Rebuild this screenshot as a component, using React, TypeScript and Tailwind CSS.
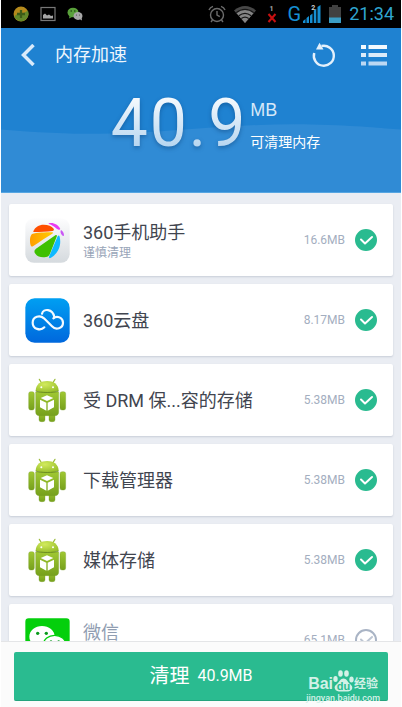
import { useState } from 'react'
import clsx from 'clsx'

type IconName = 'assistant' | 'cloud' | 'android' | 'wechat'

interface AppEntry {
  id: string
  name: string
  note?: string
  size: string
  icon: IconName
  checked: boolean
}

const apps: AppEntry[] = [
  { id: 'assistant', name: '360手机助手', note: '谨慎清理', size: '16.6MB', icon: 'assistant', checked: true },
  { id: 'cloud', name: '360云盘', size: '8.17MB', icon: 'cloud', checked: true },
  { id: 'drm', name: '受 DRM 保...容的存储', size: '5.38MB', icon: 'android', checked: true },
  { id: 'download', name: '下载管理器', size: '5.38MB', icon: 'android', checked: true },
  { id: 'media', name: '媒体存储', size: '5.38MB', icon: 'android', checked: true },
  { id: 'wechat', name: '微信', note: '\u00a0', size: '65.1MB', icon: 'wechat', checked: false },
]

function AssistantIcon() {
  return (
    <svg viewBox="0 0 135 135" className="size-full" aria-hidden="true">
      <defs>
        <linearGradient id="assistantBg" x1="0" y1="0" x2="0" y2="1">
          <stop offset="0" stopColor="#fdfdfe" />
          <stop offset="1" stopColor="#d5dade" />
        </linearGradient>
        <linearGradient id="assistantYellow" x1="0" y1="0" x2="1" y2="0">
          <stop offset="0" stopColor="#ff9d00" />
          <stop offset="1" stopColor="#ffcd00" />
        </linearGradient>
      </defs>
      <rect x="1" y="1" width="133" height="133" rx="26" fill="url(#assistantBg)" />
      <path d="M25 40C30 27 42 20 56 20c14 0 24 4 30 12 2 4 0 6-4 7-14 2-37 3-54 3-3 0-4 0-3-2Z" fill="#ff4f00" />
      <path d="M21 48c14-4 40-5 60-5 3 0 4 2 1 4-20 11-38 25-57 37-4 3-7 2-8-2-3-12-3-27 4-34Z" fill="url(#assistantYellow)" />
      <path d="M91 52c4-2 6 0 4 4L75 107c-2 6-6 9-12 10-13 3-27-1-33-11-3-5-2-10 3-14Z" fill="#3fc000" />
      <path d="M98 55c2-4 5-3 6 1 6 26-4 51-26 63-5 3-8 1-5-5Z" fill="#0fb9ff" />
      <path d="M72 16c12-4 27 4 33 15 2 4-1 5-4 4-9-2-11-11-29-17-2 0-2-1 0-2Z" fill="#e83af2" />
      <path d="M107 38c2-4 10 6 10 13 0 3-2 4-4 2-4-3-8-11-6-15Z" fill="#c956f5" />
    </svg>
  )
}

function CloudIcon() {
  return (
    <svg viewBox="0 0 135 135" className="size-full" aria-hidden="true">
      <defs>
        <linearGradient id="cloudBg" x1="0" y1="0" x2="0" y2="1">
          <stop offset="0" stopColor="#009ff2" />
          <stop offset="1" stopColor="#0068dd" />
        </linearGradient>
      </defs>
      <rect x="1" y="1" width="133" height="133" rx="28" fill="url(#cloudBg)" />
      <g fill="none" stroke="#f4faff" strokeWidth="6.5" strokeLinecap="round">
        <path d="M58 88C47 99 23 94 23 74c0-19 22-24 34-13l24 24c12 13 33 6 33-11 0-15-18-23-29-13" />
        <path d="M51 47c4-16 32-16 37 10" />
      </g>
    </svg>
  )
}

function AndroidIcon() {
  return (
    <svg viewBox="0 0 135 135" className="size-full" aria-hidden="true">
      <defs>
        <linearGradient id="droidBody" x1="0" y1="0" x2="0" y2="1">
          <stop offset="0" stopColor="#a0c832" />
          <stop offset="1" stopColor="#76a01c" />
        </linearGradient>
        <radialGradient id="droidHead" cx="0.4" cy="0.3" r="0.8">
          <stop offset="0" stopColor="#d2ea5d" />
          <stop offset="1" stopColor="#93bb27" />
        </radialGradient>
      </defs>
      <path d="m43 4 8 13M90 4l-8 13" stroke="#9cbc3c" strokeWidth="3.5" strokeLinecap="round" />
      <g fill="url(#droidBody)" stroke="#739a22" strokeWidth="1">
        <rect x="42" y="100" width="18" height="31" rx="6" />
        <rect x="72" y="100" width="18" height="31" rx="6" />
        <rect x="11" y="41" width="17" height="55" rx="6" />
        <rect x="105" y="41" width="17" height="55" rx="6" />
        <path d="M32 42h69v60c0 7-4 11-11 11H43c-7 0-11-4-11-11Z" />
      </g>
      <path d="M32 38C33 18 48 9 66.500 9S100 18 101 38c-15 6-54 6-69 0Z" fill="url(#droidHead)" />
      <path d="M32 39c15 6 54 6 69 0" fill="none" stroke="#64841f" strokeWidth="2.500" />
      <circle cx="49" cy="28" r="3" fill="#fff" />
      <circle cx="84" cy="28" r="3" fill="#fff" />
      <path d="m66 52 19 8-19 9-19-9ZM45 65l19 9v24L45 88ZM87 65l-19 9v24l19-10Z" fill="#fff" />
    </svg>
  )
}

function WechatIcon() {
  return (
    <svg viewBox="0 0 135 135" className="size-full" aria-hidden="true">
      <rect x="1" y="1" width="133" height="133" rx="10" fill="#04cf0c" />
      <ellipse cx="51" cy="56" rx="38" ry="32" fill="#fff" />
      <path d="m28 78-4 16 18-9Z" fill="#fff" />
      <circle cx="38" cy="46" r="5" fill="#0a9a1c" />
      <circle cx="64" cy="46" r="5" fill="#0a9a1c" />
      <ellipse cx="89" cy="80" rx="34" ry="28" fill="#fff" stroke="#04cf0c" strokeWidth="4" />
      <circle cx="78" cy="71" r="4" fill="#0a9a1c" />
      <circle cx="101" cy="71" r="4" fill="#0a9a1c" />
    </svg>
  )
}

const icons: Record<IconName, () => React.JSX.Element> = {
  assistant: AssistantIcon,
  cloud: CloudIcon,
  android: AndroidIcon,
  wechat: WechatIcon,
}

function StatusBar() {
  return (
    <div className="flex h-7 shrink-0 items-center justify-between bg-black pr-[7px] pl-3">
      <div className="flex items-center gap-[11px]">
        <svg viewBox="0 0 14 14" className="size-4" aria-hidden="true">
          <circle cx="7" cy="7" r="6.500" fill="#b58a1c" />
          <path d="M1 9.500C4 5 9 8 13 4a6.500 6.500 0 0 1-12 5.500Z" fill="#62892a" />
          <path d="M7 3.500v7M3.500 7h7" stroke="#3d5c18" strokeWidth="2" />
        </svg>
        <svg viewBox="0 0 16 16" className="size-4" aria-hidden="true">
          <rect x="1" y="1.500" width="14" height="13" fill="none" stroke="#777" strokeWidth="1.200" />
          <path d="M3 12.500V9l2-1.500 2 2 2-1 2 1.500 2-.5v3Z" fill="#a5a5a5" />
        </svg>
        <svg viewBox="0 0 16 14" className="h-3.5 w-4" aria-hidden="true">
          <ellipse cx="6" cy="5.500" rx="5.500" ry="4.800" fill="#59a03a" />
          <path d="m2.500 9-.5 2.500 3-1.500Z" fill="#59a03a" />
          <circle cx="4.200" cy="4" r="0.800" fill="#1c3a12" />
          <circle cx="7.800" cy="4" r="0.800" fill="#1c3a12" />
          <ellipse cx="11" cy="9" rx="4.500" ry="3.900" fill="#a8a8a8" />
          <path d="m12.500 12 2.500 1.500-.5-3Z" fill="#a8a8a8" />
          <circle cx="9.500" cy="8" r="0.600" fill="#444" />
          <circle cx="12.500" cy="8" r="0.600" fill="#444" />
        </svg>
      </div>
      <div className="flex items-center gap-2 font-[Roboto,sans-serif]">
        <svg viewBox="0 0 18 18" className="size-[18px]" fill="none" stroke="#6c6c6c" strokeWidth="1.400" aria-hidden="true">
          <circle cx="9" cy="10" r="6.500" />
          <path d="M9 6v4.200l2.800 1.500M1 5a6 6 0 0 1 4-3.700M17 5a6 6 0 0 0-4-3.700M4.500 15 3 17M13.500 15l1.500 2" />
        </svg>
        <svg viewBox="0 0 22 17" className="h-[17px] w-[22px]" aria-hidden="true">
          <path d="m11 17 11-12.500C15.500-1.500 6.500-1.500 0 4.500Z" fill="#484848" />
          <path d="m11 17 9-10.400c-5.500-4.600-12.500-4.600-18 0Z" fill="#858585" />
          <path d="M2.200 6.800c5.300-4.500 12.300-4.500 17.600 0M4.800 9.800c3.800-3 8.600-3 12.400 0M7.300 12.600c2.300-1.700 5.100-1.700 7.400 0" fill="none" stroke="#161616" strokeWidth="1.200" />
        </svg>
        <div className="flex w-4 flex-col items-center">
          <span className="text-[7px] leading-[7px] font-bold text-[#aaa]">1</span>
          <svg viewBox="0 0 10 10" className="size-2.5" aria-hidden="true">
            <path d="m1.500 1 7 8M8.500 1l-7 8" stroke="#c81010" strokeWidth="2" />
          </svg>
        </div>
        <div className="flex items-center gap-0.5">
          <span className="text-xl leading-5 text-[#168fd2]">G</span>
          <div className="relative">
            <svg viewBox="0 0 18 18" className="size-[18px]" fill="#168fd2" aria-hidden="true">
              <path d="M0 18v-2l2.500-2v4zM3.500 18v-5l2.500-2v7zM7 18v-7.500l2.500-2V18zM10.800 18V5.500l2.500-1.800V18zM14.500 18V2l3-2v18z" />
            </svg>
            <span className="absolute top-0 left-2 text-[7px] leading-[7px] font-bold text-[#ccc]">2</span>
          </div>
        </div>
        <svg viewBox="0 0 12 18" className="h-[18px] w-3" aria-hidden="true">
          <path d="M3 0h6v2h3v16H0V2h3z" fill="#414141" />
          <path d="M0 12.500h12V18H0z" fill="#3b9dc4" />
        </svg>
        <span className="text-lg leading-5 text-[#2fa6d0]">21:34</span>
      </div>
    </div>
  )
}

function Header() {
  return (
    <header className="relative h-[165px] shrink-0 border-b border-[#56a6e2] bg-[#1f82d1] text-white">
      <svg viewBox="0 0 400 165" preserveAspectRatio="none" className="absolute inset-0 size-full" aria-hidden="true">
        <path d="M0 102C60 107 110 108 160 104S260 96 310 97 380 101 400 102V165H0Z" fill="#308bd5" />
      </svg>
      <div className="relative flex h-[54px] items-center justify-between pr-3.5 pl-4">
        <div className="flex items-center gap-4">
          <button type="button" aria-label="返回" className="flex size-[22px] items-center justify-center">
            <svg viewBox="0 0 14 22" className="h-[22px] w-3.5" fill="none" stroke="#d9eafa" strokeWidth="3.500" aria-hidden="true">
              <path d="M12.500 1 2.500 11l10 10" />
            </svg>
          </button>
          <h1 className="text-lg leading-6 text-[#eef6fd]">内存加速</h1>
        </div>
        <div className="flex items-center gap-6">
          <button type="button" aria-label="刷新" className="size-[26px]">
            <svg viewBox="0 0 26 26" className="size-full" aria-hidden="true">
              <path d="M10.500 4A10 10 0 1 1 3.200 11" fill="none" stroke="#e4f0fb" strokeWidth="2.400" />
              <path d="M8.500.8 5 7.500h7.500Z" fill="#e4f0fb" />
            </svg>
          </button>
          <button type="button" aria-label="列表" className="h-[22px] w-[26px]">
            <svg viewBox="0 0 26 22" className="size-full" aria-hidden="true">
              <path d="M0 1h5v4H0zM7.500 1H26v4H7.500z" fill="#f3f9fe" />
              <path d="M0 9h5v4H0zM7.500 9H26v4H7.500z" fill="#dcebf9" />
              <path d="M0 17.500h5v4H0zM7.500 17.500H26v4H7.500z" fill="#bcd8f3" />
            </svg>
          </button>
        </div>
      </div>
      <div className="relative flex justify-center gap-1 pl-7">
        <span className="bg-linear-to-b from-[#f4f9fd] from-20% to-[#b4d4ef] to-80% bg-clip-text font-[Roboto,sans-serif] text-[66px] leading-[84px] text-transparent drop-shadow-[0_2px_2px_rgba(0,40,90,0.35)]">
          {[...'40.9'].map((char, i) => (
            <span key={i} className="mx-px">{char}</span>
          ))}
        </span>
        <div className="flex flex-col gap-2 pt-4">
          <span className="font-['Liberation_Sans',sans-serif] text-lg leading-6 text-[#d6e8f8]">MB</span>
          <span className="text-sm leading-6">可清理内存</span>
        </div>
      </div>
    </header>
  )
}

function AppRow({ app, checked, onToggle }: { app: AppEntry; checked: boolean; onToggle: () => void }) {
  const Icon = icons[app.icon]
  return (
    <li>
      <label
        htmlFor={app.id}
        className="flex h-[72px] items-center rounded-xs bg-white px-4 shadow-[0_1px_2px_rgba(100,115,140,0.25)]"
      >
        <span className="size-[45px] shrink-0">
          <Icon />
        </span>
        <span className="flex min-w-0 flex-1 flex-col pt-0.5 pl-[13px]">
          <span className={clsx('truncate text-lg leading-6', checked ? 'text-[#41454f]' : 'text-[#909db1]')}>
            {app.name}
          </span>
          {app.note && <span className="text-xs leading-4 text-[#99a5b8]">{app.note}</span>}
        </span>
        <span className="pr-2.5 text-xs text-[#a3aec0]">{app.size}</span>
        <span className="relative size-[22px] shrink-0">
          <input
            id={app.id}
            type="checkbox"
            checked={checked}
            onChange={onToggle}
            className="block size-full appearance-none rounded-full border-2 border-[#a9b4c5] checked:border-[#2abb90] checked:bg-[#2abb90]"
          />
          <svg
            viewBox="0 0 22 22"
            className={clsx('pointer-events-none absolute inset-0', checked ? 'text-white' : 'text-[#bcc5d2]')}
            fill="none"
            stroke="currentColor"
            strokeWidth="2"
            strokeLinecap="round"
            strokeLinejoin="round"
            aria-hidden="true"
          >
            <path d="m6 10.500 4 4 7-6.500" />
          </svg>
        </span>
      </label>
    </li>
  )
}

function Watermark() {
  return (
    <div className="pointer-events-none absolute right-[21px] bottom-[3px] flex flex-col items-center text-[#d3f1e7]">
      <div className="flex items-end">
        <span className="font-['Liberation_Sans',sans-serif] text-base leading-4 font-bold">Bai</span>
        <div className="relative flex h-[22px] w-[21px] items-end justify-center">
          <svg viewBox="0 0 21 22" className="absolute inset-0" fill="currentColor" aria-hidden="true">
            <ellipse cx="2.500" cy="9" rx="2.200" ry="3" />
            <ellipse cx="7.500" cy="3.500" rx="2.300" ry="3.200" />
            <ellipse cx="13.500" cy="3.500" rx="2.300" ry="3.200" />
            <ellipse cx="18.500" cy="9.500" rx="2.200" ry="3" />
            <path d="M10.500 8.500c3 0 4 3 6 5s3.500 3 2.500 5.500c-1 3-5 2.500-8.500 2.500S3 22 2 19s.5-3.500 2.500-5.500 3-5 6-5Z" />
          </svg>
          <span className="relative font-['Liberation_Sans',sans-serif] text-[11px] leading-3 font-bold text-[#2abb90]">du</span>
        </div>
        <span className="text-xs leading-4 font-bold">经验</span>
      </div>
      <span className="text-[9px] leading-3 font-medium">jingyan.baidu.com</span>
    </div>
  )
}

export default function App() {
  const [selected, setSelected] = useState<Set<string>>(
    new Set(apps.filter(app => app.checked).map(app => app.id)),
  )

  const handleToggle = (id: string) => {
    setSelected(prev => {
      const next = new Set(prev)
      if (next.has(id)) next.delete(id)
      else next.add(id)
      return next
    })
  }

  return (
    <div className="flex h-screen flex-col bg-white px-px font-[Roboto,'Noto_Sans_CJK_SC',sans-serif]">
      <StatusBar />
      <Header />
      <main className="min-h-0 flex-1 overflow-hidden bg-[#eaedf3] px-2 pt-[11px]">
        <ul className="flex flex-col gap-2">
          {apps.map(app => (
            <AppRow key={app.id} app={app} checked={selected.has(app.id)} onToggle={() => handleToggle(app.id)} />
          ))}
        </ul>
      </main>
      <footer className="relative shrink-0 border-t border-[#e4e5e7] bg-[#fbfbfb] px-[13px] pt-2.5 pb-[6px]">
        <button
          type="button"
          className="flex h-[49px] w-full items-center justify-center gap-2 rounded-xs border-b border-[#24a37d] bg-[#2abb90] text-white"
        >
          <span className="text-xl">清理</span>
          <span className="text-base">40.9MB</span>
        </button>
        <Watermark />
      </footer>
    </div>
  )
}
